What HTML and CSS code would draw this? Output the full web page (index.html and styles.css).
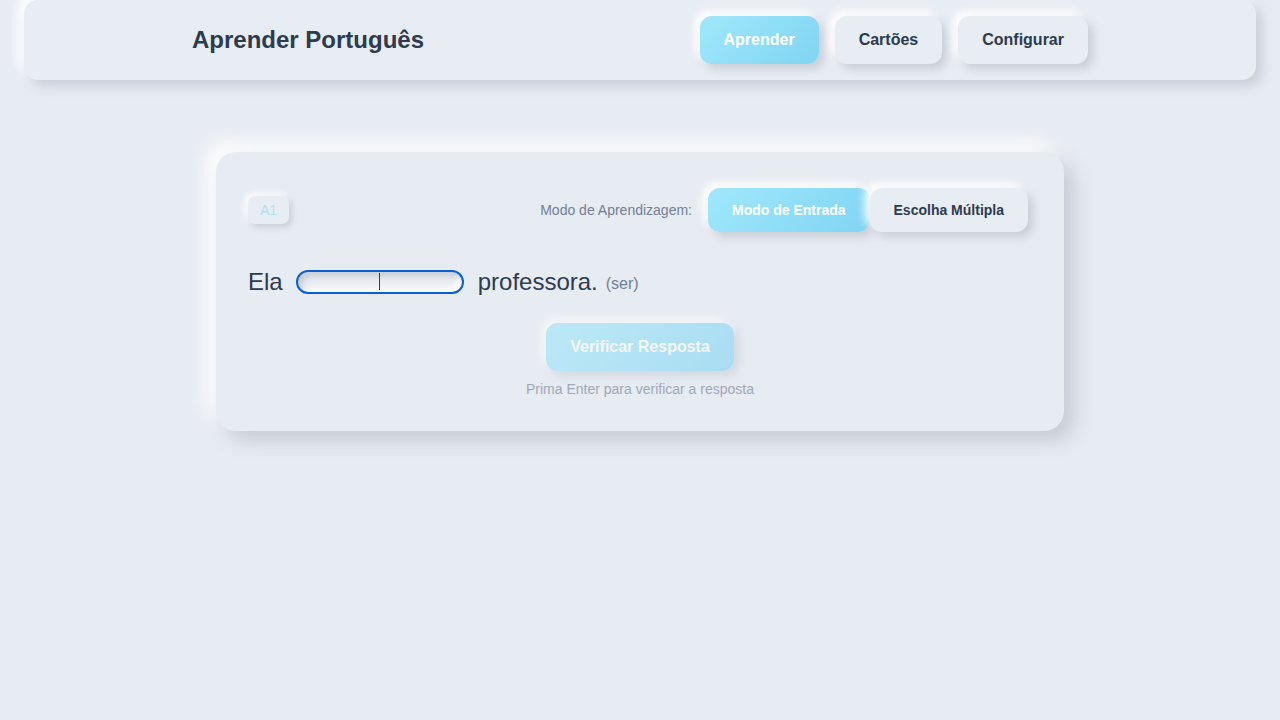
FILE: index.html
```html
<!DOCTYPE html>
<html lang="pt">
<head>
<meta charset="utf-8">
<title>Aprender Português</title>
<link rel="stylesheet" href="styles.css">
</head>
<body>
<header class="topbar">
  <div class="topbar-inner">
    <h1 class="brand">Aprender Português</h1>
    <nav class="nav">
      <button class="nav-btn active">Aprender</button>
      <button class="nav-btn">Cartões</button>
      <button class="nav-btn">Configurar</button>
    </nav>
  </div>
</header>
<main class="main">
  <section class="card">
    <div class="card-head">
      <span class="level">A1</span>
      <div class="mode">
        <span class="mode-label">Modo de Aprendizagem:</span>
        <div class="mode-btns">
          <button class="mode-btn active">Modo de Entrada</button>
          <button class="mode-btn">Escolha Múltipla</button>
        </div>
      </div>
    </div>
    <div class="sentence">
      <span class="word">Ela</span>
      <span class="blank"><input class="answer" type="text" aria-label="resposta"><span class="ibeam"></span></span>
      <span class="word">professora.</span>
      <span class="hint-verb">(ser)</span>
    </div>
    <div class="actions">
      <button class="verify">Verificar Resposta</button>
      <p class="help">Prima Enter para verificar a resposta</p>
    </div>
  </section>
</main>
</body>
</html>
```
FILE: styles.css
```css
* { box-sizing: border-box; }
html, body { margin: 0; padding: 0; }
body {
  background: #e7ebf2;
  font-family: "Liberation Sans", Arial, sans-serif;
  color: #2d3748;
  min-height: 720px;
}
.topbar {
  margin: 0 24px;
  height: 80px;
  background: #e8ecf3;
  border-radius: 14px;
  box-shadow: 6px 6px 12px #c9ced8, -6px -6px 12px #ffffff;
}
.topbar-inner {
  max-width: 896px;
  height: 80px;
  margin: 0 auto;
  display: flex;
  align-items: center;
  justify-content: space-between;
}
.brand {
  margin: 0;
  font-size: 24px;
  font-weight: 700;
  color: #2d3b4f;
}
.nav { display: flex; gap: 16px; }
.nav-btn {
  font-family: inherit;
  font-size: 16px;
  font-weight: 700;
  color: #2d3b4f;
  height: 48px;
  padding: 0 24px;
  border: none;
  border-radius: 12px;
  background: #e8ecf3;
  box-shadow: 5px 5px 10px #c8cdd7, -5px -5px 10px #ffffff;
}
.nav-btn.active {
  color: #ffffff;
  background: linear-gradient(135deg, #a0e8fb, #80d4f3);
}
.main {
  display: flex;
  justify-content: center;
  padding-top: 72px;
}
.card {
  width: 848px;
  background: #e7ebf2;
  border-radius: 20px;
  padding: 36px 32px 32px;
  box-shadow: 10px 10px 20px #c6cbd5, -10px -10px 20px #ffffff;
}
.card-head {
  display: flex;
  align-items: center;
  justify-content: space-between;
  height: 44px;
}
.level {
  display: inline-flex;
  align-items: center;
  justify-content: center;
  width: 41px;
  height: 28px;
  font-size: 14px;
  color: #a9e3f6;
  background: #e8ecf3;
  border-radius: 7px;
  box-shadow: 3px 3px 6px #c9ced8, -3px -3px 6px #ffffff;
}
.mode { display: flex; align-items: center; gap: 16px; }
.mode-label { font-size: 14px; color: #718096; }
.mode-btns { display: flex; padding: 0 4px 0 0; }
.mode-btn {
  font-family: inherit;
  font-size: 14px;
  font-weight: 700;
  color: #2d3b4f;
  height: 44px;
  padding: 0 24px;
  border: none;
  border-radius: 12px;
  background: #e8ecf3;
  box-shadow: 5px 5px 10px #c8cdd7, -5px -5px 10px #ffffff;
}
.mode-btn.active {
  color: #ffffff;
  background: linear-gradient(135deg, #a0e8fb, #80d4f3);
}
.sentence {
  display: flex;
  align-items: center;
  height: 28px;
  margin-top: 36px;
  font-size: 24px;
  color: #2d3b4f;
}
.blank { position: relative; display: inline-flex; margin: 0 14px 0 13px; }
.answer {
  width: 168px;
  height: 24px;
  border: 2px solid #0a60cf;
  border-radius: 12px;
  background: #e9ecf2;
  box-shadow: inset 4px 4px 6px #c7ccd6, inset -4px -4px 6px #ffffff;
  outline: none;
  font-family: inherit;
  font-size: 16px;
  padding: 0 10px;
}
.ibeam {
  position: absolute;
  left: 83px;
  top: 3px;
  width: 1px;
  height: 17px;
  background: #2d3b4f;
}
.hint-verb { font-size: 16px; color: #718096; margin-left: 8px; margin-top: 4px; }
.actions {
  display: flex;
  flex-direction: column;
  align-items: center;
  margin-top: 27px;
}
.verify {
  font-family: inherit;
  font-size: 16px;
  font-weight: 700;
  color: #ffffff;
  height: 48px;
  padding: 0 24px;
  border: none;
  border-radius: 12px;
  background: linear-gradient(135deg, #a0e8fb, #80d4f3);
  box-shadow: 5px 5px 10px #c8cdd7, -5px -5px 10px #ffffff;
  opacity: 0.6;
}
.help {
  margin: 8px 0 0;
  font-size: 14px;
  line-height: 20px;
  color: #a0a8b8;
}
```
